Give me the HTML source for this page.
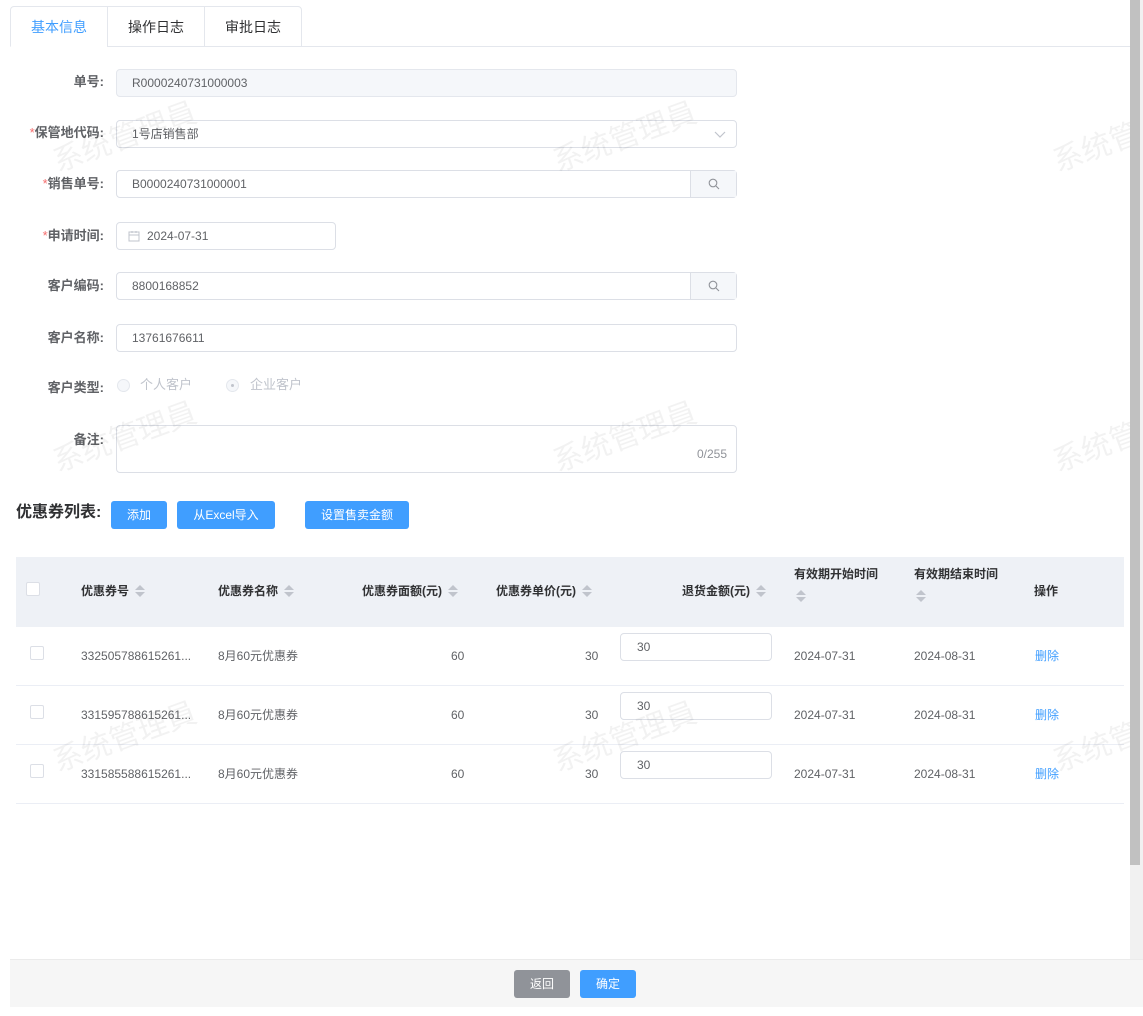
<!DOCTYPE html>
<html><head><meta charset="utf-8"><style>
*{box-sizing:border-box;margin:0;padding:0}
body{width:1143px;height:1016px;background:#fff;font-family:"Liberation Sans","Noto Sans CJK SC",sans-serif;font-size:12px;line-height:16px;color:#606266;position:relative;overflow:hidden}
.a{position:absolute}
.tab{position:absolute;top:6px;height:41px;border:1px solid #e4e7ed;background:#fff;font-size:14px;color:#303133;text-align:center;line-height:40px}
.lbl{position:absolute;width:104px;text-align:right;font-weight:bold;font-size:13px;line-height:16px;color:#606266;left:0}
.lbl i{color:#f56c6c;font-style:normal;font-weight:normal}
.inp{position:absolute;left:116px;height:28px;border:1px solid #dcdfe6;border-radius:4px;padding-left:15px;line-height:26px;color:#606266;background:#fff}
.btn{position:absolute;top:501px;height:28px;background:#409eff;color:#fff;border-radius:3px;text-align:center;line-height:28px;font-size:12px}
.th{position:absolute;font-weight:bold;color:#303133;font-size:12px;line-height:16px}
.sort{display:inline-block;width:10px;height:14px;vertical-align:middle;margin-left:6px;position:relative}
.sort:before{content:"";position:absolute;left:0;top:0;border:5px solid transparent;border-bottom:5px solid #c0c4cc;border-top:0}
.sort:after{content:"";position:absolute;left:0;top:7px;border:5px solid transparent;border-top:5px solid #c0c4cc;border-bottom:0}
.cb{position:absolute;width:14px;height:14px;border:1px solid #dcdfe6;border-radius:2px;background:#fff}
.td{position:absolute;color:#606266;line-height:14px;height:14px;overflow:visible}
.row{position:absolute;left:16px;width:1108px;height:1px;background:#ebeef5}
.wm{position:absolute;font-size:30px;color:rgba(0,0,0,0.05);transform:rotate(-20deg);white-space:nowrap}
</style></head><body>
<div class="a" style="left:10px;top:46px;width:1120px;height:1px;background:#e4e7ed"></div>
<div class="tab" style="left:10px;width:98px;color:#409eff;border-bottom-color:#fff;border-radius:4px 0 0 0">基本信息</div>
<div class="tab" style="left:107px;width:98px">操作日志</div>
<div class="tab" style="left:204px;width:98px;border-radius:0 4px 0 0">审批日志</div>

<div class="lbl" style="top:74px">单号:</div>
<div class="inp" style="top:69px;width:621px;background:#f5f7fa;border-color:#e4e7ed">R0000240731000003</div>
<div class="lbl" style="top:125px"><i>*</i>保管地代码:</div>
<div class="inp" style="top:120px;width:621px">1号店销售部<svg class="a" style="right:10px;top:8px" width="12" height="10" viewBox="0 0 12 10"><path d="M1 3l5 5 5-5" fill="none" stroke="#c0c4cc" stroke-width="1.2"/></svg></div>
<div class="lbl" style="top:176px"><i>*</i>销售单号:</div>
<div class="inp" style="top:170px;width:621px">B0000240731000001<div class="a" style="right:0;top:0;width:46px;height:26px;background:#f5f7fa;border-left:1px solid #dcdfe6"><svg class="a" style="left:17px;top:7px" width="12" height="12" viewBox="0 0 12 12"><circle cx="5" cy="5" r="3.8" fill="none" stroke="#909399" stroke-width="1.1"/><path d="M8 8l3 3" stroke="#909399" stroke-width="1.1"/></svg></div></div>
<div class="lbl" style="top:228px"><i>*</i>申请时间:</div>
<div class="inp" style="top:222px;width:220px;padding-left:30px">2024-07-31<svg class="a" style="left:11px;top:7px" width="12" height="12" viewBox="0 0 12 12"><rect x="1" y="2" width="10" height="9" fill="none" stroke="#c0c4cc"/><path d="M1 5h10M4 1v2M8 1v2" stroke="#c0c4cc"/></svg></div>
<div class="lbl" style="top:278px">客户编码:</div>
<div class="inp" style="top:272px;width:621px">8800168852<div class="a" style="right:0;top:0;width:46px;height:26px;background:#f5f7fa;border-left:1px solid #dcdfe6"><svg class="a" style="left:17px;top:7px" width="12" height="12" viewBox="0 0 12 12"><circle cx="5" cy="5" r="3.8" fill="none" stroke="#909399" stroke-width="1.1"/><path d="M8 8l3 3" stroke="#909399" stroke-width="1.1"/></svg></div></div>
<div class="lbl" style="top:330px">客户名称:</div>
<div class="inp" style="top:324px;width:621px">13761676611</div>
<div class="lbl" style="top:380px">客户类型:</div>
<div class="a" style="left:117px;top:379px;width:13px;height:13px;border:1px solid #e4e7ed;border-radius:50%;background:#f5f7fa"></div>
<div class="a" style="left:140px;top:377px;color:#c0c4cc;font-size:13px;line-height:16px">个人客户</div>
<div class="a" style="left:226px;top:379px;width:13px;height:13px;border:1px solid #e4e7ed;border-radius:50%;background:#f5f7fa"><div class="a" style="left:4px;top:4px;width:3px;height:3px;border-radius:50%;background:#c0c4cc"></div></div>
<div class="a" style="left:250px;top:377px;color:#c0c4cc;font-size:13px;line-height:16px">企业客户</div>
<div class="lbl" style="top:432px">备注:</div>
<div class="inp" style="top:425px;width:621px;height:48px"><span class="a" style="right:9px;top:20px;line-height:16px;color:#909399">0/255</span></div>

<div class="a" style="left:16px;top:503px;font-size:16px;line-height:20px;font-weight:bold;color:#303133">优惠券列表:</div>
<div class="btn" style="left:111px;width:56px">添加</div>
<div class="btn" style="left:177px;width:98px">从Excel导入</div>
<div class="btn" style="left:305px;width:104px">设置售卖金额</div>

<div class="a" style="left:16px;top:557px;width:1108px;height:70px;background:#eef1f6"></div>
<div class="cb" style="left:26px;top:582px"></div>
<div class="th" style="left:81px;top:583px">优惠券号<span class="sort"></span></div>
<div class="th" style="left:218px;top:583px">优惠券名称<span class="sort"></span></div>
<div class="th" style="left:362px;top:583px">优惠券面额(元)<span class="sort"></span></div>
<div class="th" style="left:496px;top:583px">优惠券单价(元)<span class="sort"></span></div>
<div class="th" style="left:682px;top:583px">退货金额(元)<span class="sort"></span></div>
<div class="th" style="left:794px;top:566px">有效期开始时间<br><span class="sort" style="margin:8px 0 0 2px"></span></div>
<div class="th" style="left:914px;top:566px">有效期结束时间<br><span class="sort" style="margin:8px 0 0 2px"></span></div>
<div class="th" style="left:1034px;top:583px">操作</div>

<div class="cb" style="left:30px;top:646px"></div>
<div class="td" style="left:81px;top:649px">332505788615261...</div><div class="td" style="left:218px;top:649px">8月60元优惠券</div><div class="td" style="left:451px;top:649px">60</div><div class="td" style="left:585px;top:649px">30</div>
<div class="inp" style="left:620px;top:633px;width:152px;height:28px;padding-left:16px">30</div>
<div class="td" style="left:794px;top:649px">2024-07-31</div><div class="td" style="left:914px;top:649px">2024-08-31</div><div class="td" style="left:1035px;top:649px;color:#409eff">删除</div>
<div class="row" style="top:685px"></div>

<div class="cb" style="left:30px;top:705px"></div>
<div class="td" style="left:81px;top:708px">331595788615261...</div><div class="td" style="left:218px;top:708px">8月60元优惠券</div><div class="td" style="left:451px;top:708px">60</div><div class="td" style="left:585px;top:708px">30</div>
<div class="inp" style="left:620px;top:692px;width:152px;height:28px;padding-left:16px">30</div>
<div class="td" style="left:794px;top:708px">2024-07-31</div><div class="td" style="left:914px;top:708px">2024-08-31</div><div class="td" style="left:1035px;top:708px;color:#409eff">删除</div>
<div class="row" style="top:744px"></div>

<div class="cb" style="left:30px;top:764px"></div>
<div class="td" style="left:81px;top:767px">331585588615261...</div><div class="td" style="left:218px;top:767px">8月60元优惠券</div><div class="td" style="left:451px;top:767px">60</div><div class="td" style="left:585px;top:767px">30</div>
<div class="inp" style="left:620px;top:751px;width:152px;height:28px;padding-left:16px">30</div>
<div class="td" style="left:794px;top:767px">2024-07-31</div><div class="td" style="left:914px;top:767px">2024-08-31</div><div class="td" style="left:1035px;top:767px;color:#409eff">删除</div>
<div class="row" style="top:803px"></div>

<div class="wm" style="left:50px;top:130px">系统管理員</div>
<div class="wm" style="left:550px;top:130px">系统管理員</div>
<div class="wm" style="left:1050px;top:130px">系统管理員</div>
<div class="wm" style="left:50px;top:430px">系统管理員</div>
<div class="wm" style="left:550px;top:430px">系统管理員</div>
<div class="wm" style="left:1050px;top:430px">系统管理員</div>
<div class="wm" style="left:50px;top:730px">系统管理員</div>
<div class="wm" style="left:550px;top:730px">系统管理員</div>
<div class="wm" style="left:1050px;top:730px">系统管理員</div>

<div class="a" style="left:1130px;top:0;width:13px;height:959px;background:#f1f1f1"></div>
<div class="a" style="left:1130px;top:0;width:10px;height:865px;background:#c1c1c1"></div>
<div class="a" style="left:10px;top:959px;width:1133px;height:48px;background:#f6f6f6;border-top:1px solid #ebebeb"></div>
<div class="a" style="left:514px;top:970px;width:56px;height:28px;background:#909399;border-radius:3px;color:#fff;text-align:center;line-height:28px">返回</div>
<div class="a" style="left:580px;top:970px;width:56px;height:28px;background:#409eff;border-radius:3px;color:#fff;text-align:center;line-height:28px">确定</div>
</body></html>
